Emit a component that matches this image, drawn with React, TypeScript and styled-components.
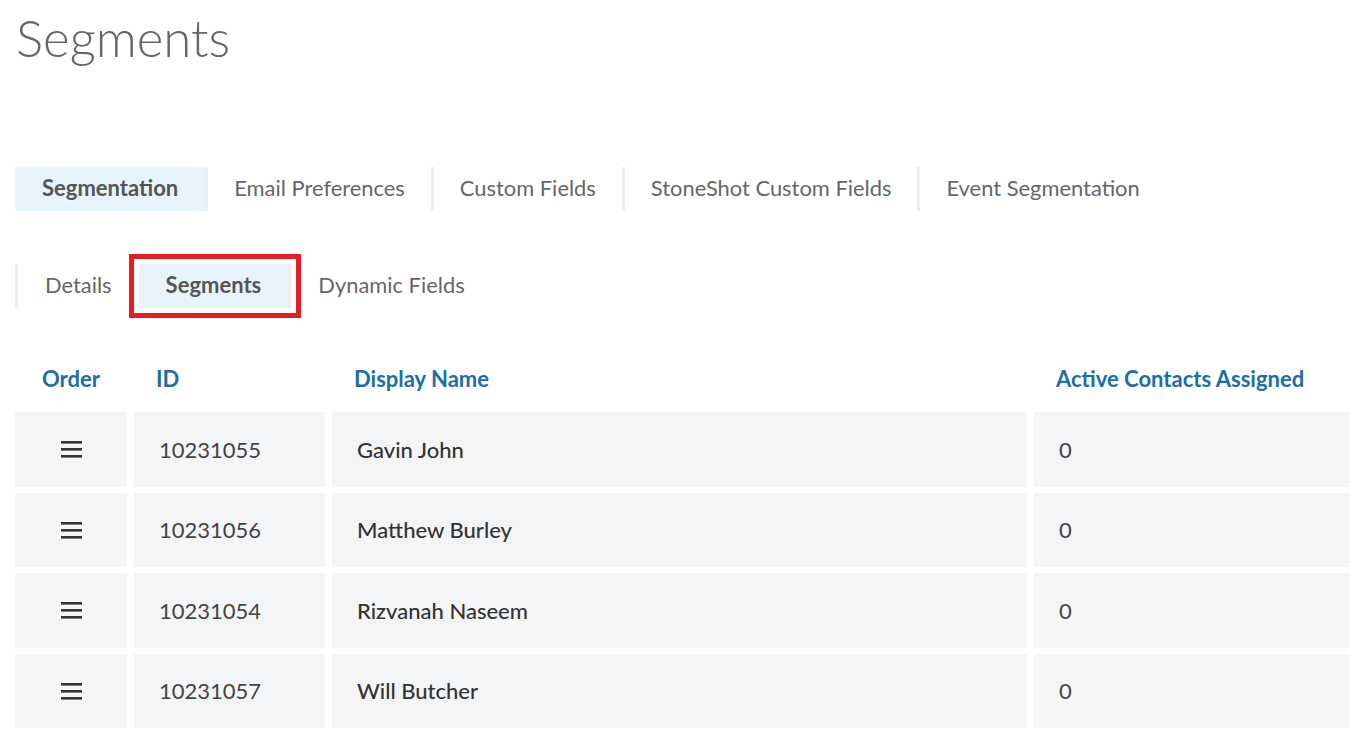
import * as React from "react";
import styled, { createGlobalStyle } from "styled-components";

const FOND = "#ffffff";
const TEXTE = "#666666";
const TEXTE_FORT = "#333333";
const BLEU = "#1b6fa3";
const ONGLET_ACTIF = "#e8f4fb";
const SEPARATEUR = "#eceef1";
const CELLULE = "#f4f5f7";
const ROUGE = "#e31e24";

const Global = createGlobalStyle`
    body {
        margin: 0;
        background: ${FOND};
        font-family: Lato, "Open Sans", "Liberation Sans", sans-serif;
    }
`;

const Page = styled.div`
    padding: 7px 0 0 15px;
    display: flex;
    flex-direction: column;
`;

const Titre = styled.h1`
    margin: 0 0 99px 1px;
    font-size: 51px;
    line-height: 1.2;
    font-weight: 300;
    color: ${TEXTE};
`;

const BarreOnglets = styled.div<{ bordure?: boolean }>`
    display: flex;
    height: 44px;
    border-left: ${props => props.bordure ? `3px solid ${SEPARATEUR}` : "none"};
    align-self: flex-start;
`;

const Onglet = styled.div<{ actif?: boolean; separe?: boolean }>`
    display: flex;
    align-items: center;
    padding: 0 ${props => props.actif ? "27px" : "26px"} 3px;
    font-size: ${props => props.actif ? "22px" : "21.9px"};
    color: ${props => props.actif ? "#555555" : TEXTE};
    font-weight: ${props => props.actif ? 700 : 400};
    background: ${props => props.actif ? ONGLET_ACTIF : "transparent"};
    border-radius: 3px 0 0 3px;
    border-right: ${props => props.separe ? `3px solid ${SEPARATEUR}` : "none"};
`;

/* annotation rouge autour de l'onglet sélectionné */
const Cadre = styled.div`
    display: flex;
    margin: -10px;
    padding: 5px;
    border: 5px solid ${ROUGE};
`;

const SousOnglets = styled(BarreOnglets)`
    margin-top: 53px;
`;

const Grille = styled.div`
    display: grid;
    grid-template-columns: 112px 191px 695px 1fr;
    column-gap: 7px;
`;

const Entete = styled(Grille)`
    margin-top: 48px;
    height: 44px;
    align-items: center;
`;

const Lignes = styled(Grille)`
    margin-top: 12px;
    grid-auto-rows: 74.5px;
    row-gap: 6px;
`;

const TitreColonne = styled.div<{ centre?: boolean }>`
    font-size: 22px;
    font-weight: 700;
    color: ${BLEU};
    text-align: ${props => props.centre ? "center" : "left"};
    padding-left: ${props => props.centre ? "0" : "22px"};
`;

const Cellule = styled.div<{ centre?: boolean; gras?: boolean }>`
    background: ${CELLULE};
    display: flex;
    align-items: center;
    justify-content: ${props => props.centre ? "center" : "flex-start"};
    padding-left: ${props => props.centre ? "0" : "25px"};
    font-size: 22px;
    font-weight: ${props => props.gras ? 500 : 400};
    color: ${props => props.gras ? TEXTE_FORT : "#444444"};
`;

const Poignee = () => (
    <svg width="21" height="18" viewBox="0 0 21 18">
        <rect x="0" y="1" width="21" height="2.6" fill="#333" />
        <rect x="0" y="8" width="21" height="2.6" fill="#333" />
        <rect x="0" y="15" width="21" height="2.6" fill="#333" />
    </svg>
);

const segments = [
    { id: "10231055", nom: "Gavin John", actifs: 0 },
    { id: "10231056", nom: "Matthew Burley", actifs: 0 },
    { id: "10231054", nom: "Rizvanah Naseem", actifs: 0 },
    { id: "10231057", nom: "Will Butcher", actifs: 0 },
];

export default function App() {
    return (
        <Page>
            <Global />
            <Titre>Segments</Titre>
            <BarreOnglets>
                <Onglet actif separe>Segmentation</Onglet>
                <Onglet separe>Email Preferences</Onglet>
                <Onglet separe>Custom Fields</Onglet>
                <Onglet separe>StoneShot Custom Fields</Onglet>
                <Onglet>Event Segmentation</Onglet>
            </BarreOnglets>
            <SousOnglets bordure>
                <Onglet style={{ paddingLeft: 27, paddingRight: 27 }}>Details</Onglet>
                <Cadre>
                    <Onglet actif separe>Segments</Onglet>
                </Cadre>
                <Onglet style={{ paddingLeft: 27 }}>Dynamic Fields</Onglet>
            </SousOnglets>
            <Entete>
                <TitreColonne centre>Order</TitreColonne>
                <TitreColonne>ID</TitreColonne>
                <TitreColonne>Display Name</TitreColonne>
                <TitreColonne>Active Contacts Assigned</TitreColonne>
            </Entete>
            <Lignes>
                {segments.map(s => (
                    <React.Fragment key={s.id}>
                        <Cellule centre><Poignee /></Cellule>
                        <Cellule>{s.id}</Cellule>
                        <Cellule gras>{s.nom}</Cellule>
                        <Cellule>{s.actifs}</Cellule>
                    </React.Fragment>
                ))}
            </Lignes>
        </Page>
    );
}
